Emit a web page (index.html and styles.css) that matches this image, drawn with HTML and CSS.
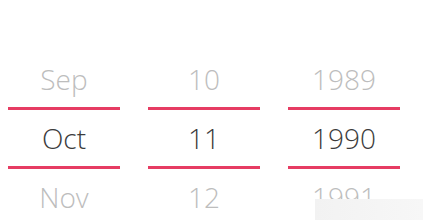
FILE: index.html
```html
<html>
<head>
    <title>Date Picker</title>
    <link rel="stylesheet" href="styles.css">
</head>
<body>
    <div class="picker">
        <div class="col">
            <div class="item">Sep</div>
            <div class="item current">Oct</div>
            <div class="item">Nov</div>
        </div>
        <div class="col">
            <div class="item">10</div>
            <div class="item current">11</div>
            <div class="item">12</div>
        </div>
        <div class="col">
            <div class="item">1989</div>
            <div class="item current">1990</div>
            <div class="item">1991</div>
        </div>
    </div>
    <div class="mark"></div>
</body>
</html>
```

FILE: styles.css
```css
body {
    margin: 0; background: white;
    font-family: "Open Sans", "Noto Sans", sans-serif;
    height: 220px; overflow: hidden;
}

.picker {
    display: flex; gap: 28px;
    padding: 53px 0 0 8px;
}

.col {
    width: 112px;
    display: flex; flex-direction: column;
}

.item {
    height: 56px; line-height: 56px;
    text-align: center; font-size: 28px; font-weight: 300;
    color: #bdbdbd;
}

.item:first-child {
    height: 54px; line-height: 53px;
}

.item.current {
    color: #3c3c3c;
    border-top: 3px solid #e63c63; border-bottom: 3px solid #e63c63;
}

.mark {
    position: absolute; left: 315px; top: 199px;
    width: 108px; height: 21px;
    background: linear-gradient(to right, #f2f2f2, #f7f7f7);
}
```
